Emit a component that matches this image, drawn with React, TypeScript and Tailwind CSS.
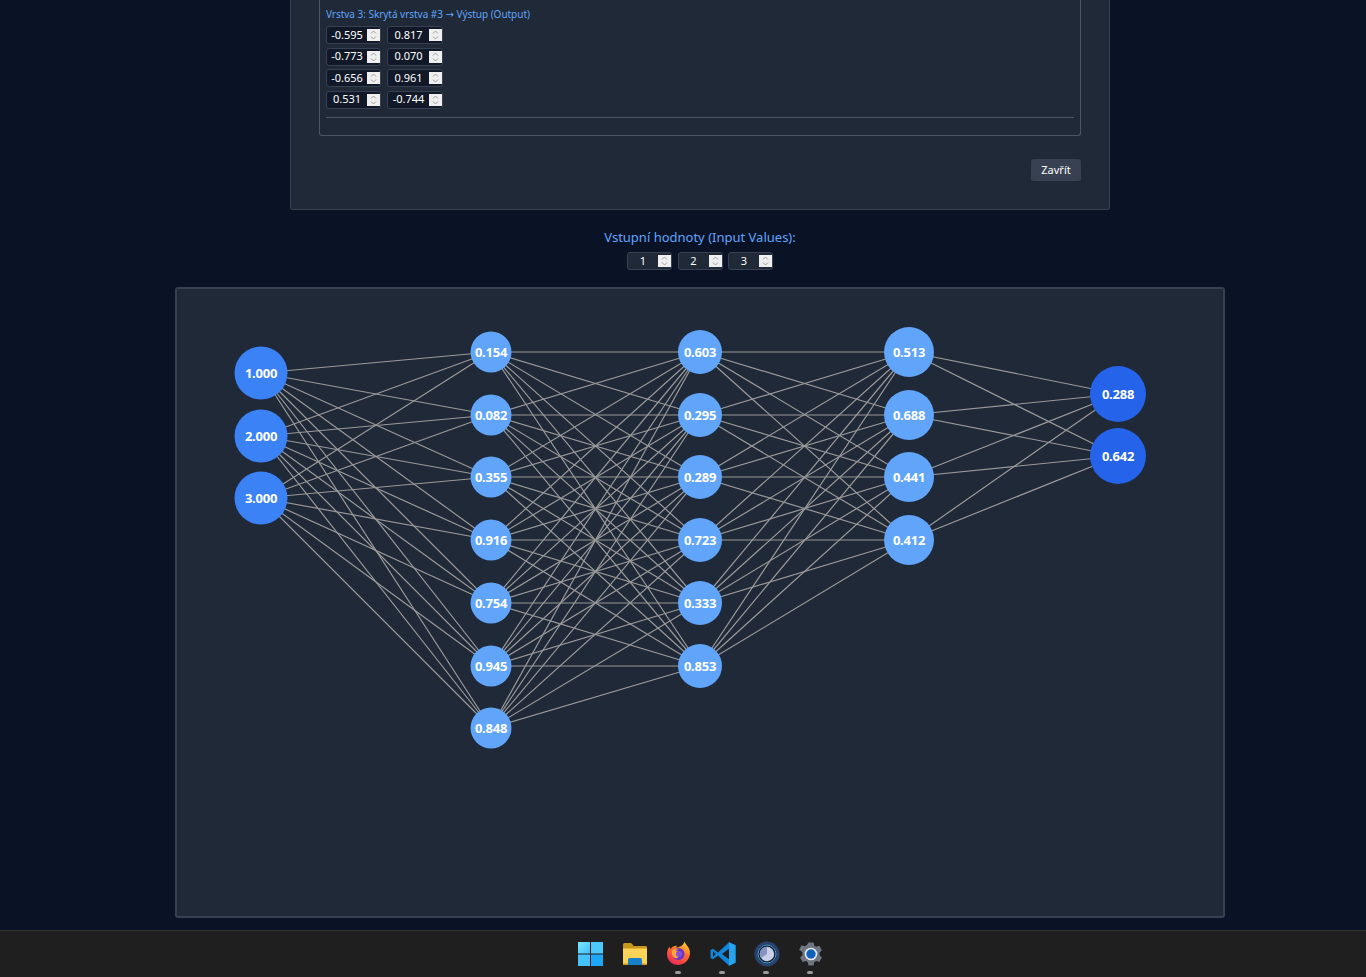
const layers = [
  { x: 84, r: 26.5, fill: '#3b82f6', nodes: [[84, '1.000'], [147, '2.000'], [209, '3.000']] },
  {
    x: 314,
    r: 20.5,
    fill: '#60a5fa',
    nodes: [[63, '0.154'], [126, '0.082'], [188, '0.355'], [251, '0.916'], [314, '0.754'], [377, '0.945'], [439, '0.848']],
  },
  {
    x: 523,
    r: 22,
    fill: '#60a5fa',
    nodes: [[63, '0.603'], [126, '0.295'], [188, '0.289'], [251, '0.723'], [314, '0.333'], [377, '0.853']],
  },
  { x: 732, r: 25, fill: '#60a5fa', nodes: [[63, '0.513'], [126, '0.688'], [188, '0.441'], [251, '0.412']] },
  { x: 941, r: 28, fill: '#2563eb', nodes: [[105, '0.288'], [167, '0.642']] },
] as { x: number; r: number; fill: string; nodes: [number, string][] }[];

const weights = [
  ['-0.595', '0.817'],
  ['-0.773', '0.070'],
  ['-0.656', '0.961'],
  ['0.531', '-0.744'],
];

function Network() {
  return (
    <svg width="1046" height="627" className="block">
      {layers.slice(0, -1).map((layer, i) =>
        layer.nodes.map(([y1]) =>
          layers[i + 1].nodes.map(([y2]) => (
            <line
              key={`${i}-${y1}-${y2}`}
              x1={layer.x}
              y1={y1}
              x2={layers[i + 1].x}
              y2={y2}
              stroke="#9a9a9a"
              strokeWidth="1.2"
            />
          )),
        ),
      )}
      {layers.map((layer) =>
        layer.nodes.map(([y, label]) => (
          <g key={`${layer.x}-${y}`}>
            <circle cx={layer.x} cy={y} r={layer.r} fill={layer.fill} />
            <text
              x={layer.x}
              y={y + 5}
              textAnchor="middle"
              fill="#ffffff"
              className="text-[13px] font-bold tracking-[-0.25px]"
            >
              {label}
            </text>
          </g>
        )),
      )}
    </svg>
  );
}

function Pill() {
  return <span className="absolute left-1/2 -translate-x-1/2 top-[29px] w-[6px] h-[3px] rounded-full bg-[#9a9a9a]" />;
}

function TaskbarIcons() {
  return (
    <>
      <div className="relative w-6 h-6">
        <svg width="25" height="24" viewBox="0 0 25 24">
          <defs>
            <linearGradient id="win" x1="0" y1="0" x2="1" y2="1">
              <stop offset="0" stopColor="#7be6fb" />
              <stop offset="1" stopColor="#3fc0fa" />
            </linearGradient>
          </defs>
          <rect x="0" y="0" width="12" height="11.500" fill="url(#win)" />
          <rect x="13" y="0" width="12" height="11.500" fill="#4cc8fa" />
          <rect x="0" y="12.500" width="12" height="11.500" fill="#45c2fa" />
          <rect x="13" y="12.500" width="12" height="11.500" fill="#1ea6f8" />
        </svg>
      </div>
      <div className="relative w-6 h-6">
        <svg width="26" height="24" viewBox="0 0 26 24">
          <path d="M1 2.500Q1 1 2.500 1H9l3 3h12Q25 4 25 5.500V22H1z" fill="#c8961a" />
          <path d="M1 6.500h24V21.500Q25 23 23.500 23h-21Q1 23 1 21.500z" fill="#fdd457" />
          <rect x="1" y="21.500" width="24" height="1.500" fill="#d19a1e" />
          <path d="M6 23v-5.500q0-1.500 1.500-1.500h11q1.500 0 1.500 1.500V23z" fill="#1a7fc9" />
        </svg>
      </div>
      <div className="relative w-6 h-6">
        <svg width="25" height="25" viewBox="0 0 25 25" className="-mt-px">
          <defs>
            <linearGradient id="fox" x1="0.75" y1="0" x2="0.25" y2="1">
              <stop offset="0" stopColor="#ffd02e" />
              <stop offset="0.45" stopColor="#ff6b2e" />
              <stop offset="1" stopColor="#e8255a" />
            </linearGradient>
          </defs>
          <path d="M18.500 0.500c.5 2 3 4 4.500 7 1.500 3.200 1.400 7.500-1 11-2.200 3.300-5.800 5.500-9.800 5.500C5.700 24 1 19.200 1 13 1 10 2 7.200 3.500 5.500l.6 2.700C5.600 6 8.300 4.300 11.500 4.700c-1 .7-1.500 1.300-1.700 1.800 2.800-.3 7.400-1 8.700-6z" fill="url(#fox)" />
          <circle cx="12.500" cy="13" r="6" fill="#6a35c9" />
          <path d="M6 10c1.500-2.200 4.500-3 7-1.700-1.500.2-2.800.8-3.500 1.800 2.700-.6 6.200.7 6.700 3.700-1-1-2.200-1.400-3.200-1.300 1 2-.2 4.400-2.700 4.700C7.800 17.400 5.300 14.400 6 10z" fill="#ffa63d" />
          <circle cx="13" cy="13" r="3" fill="#8b4fd9" />
        </svg>
        <Pill />
      </div>
      <div className="relative w-6 h-6">
        <svg width="26" height="24" viewBox="0 0 26 24">
          <path d="M19 0.300 25.500 3.300V20.700L19 23.700 8 13.500 3 17.300 0.500 16V8L3 6.700 8 10.500zM19 6.800 12 12l7 5.200z" fill="#1285d6" />
          <path d="M19 0.300 25.500 3.300V20.700L19 23.700z" fill="#27a3ee" />
          <path d="M3 9.300 5.700 12 3 14.700z" fill="#1f1f1f" />
        </svg>
        <Pill />
      </div>
      <div className="relative w-6 h-6">
        <svg width="26" height="26" viewBox="0 0 26 26" className="-mt-px">
          <circle cx="13" cy="13" r="12.500" fill="#2a4270" />
          <circle cx="13" cy="13" r="9.500" fill="#0f1c33" />
          <circle cx="13" cy="13" r="9" fill="none" stroke="#49a0c9" strokeWidth="1" />
          <circle cx="13" cy="13" r="7.200" fill="#c9cfe6" />
          <path d="M13 5.800a7.200 7.200 0 0 0-6 11.200L13 13z" fill="#8794bf" />
        </svg>
        <Pill />
      </div>
      <div className="relative w-6 h-6">
        <svg width="26" height="24" viewBox="0 0 24 24">
          <path d="M9.500 0.500h5l.8 3.200 2 1.100 3.100-1 2.500 4.400-2.300 2.300v2.800l2.300 2.300-2.500 4.300-3.100-.9-2 1.100-.8 3.300h-5l-.8-3.300-2-1.100-3.100.9-2.500-4.300 2.300-2.300V10L.1 7.700l2.500-4.400 3.100 1 2-1.100z" fill="#6f7680" />
          <circle cx="12" cy="12" r="6.300" fill="#e4e9f0" />
          <circle cx="12" cy="12" r="4.700" fill="#0f62b8" />
        </svg>
        <Pill />
      </div>
    </>
  );
}

function NumberInput({ value, className }: { value: string; className: string }) {
  return (
    <div className={`h-[18px] flex items-center rounded-[3px] border border-[#374151] ${className}`}>
      <input readOnly value={value} className="flex-1 min-w-0 text-center text-white bg-transparent outline-none text-[11px]" />
      <span className="w-[13px] h-[12px] bg-[#efefef] flex items-center justify-center">
        <svg width="7" height="10" viewBox="0 0 7 10" fill="none" stroke="#a0a0a0" strokeWidth="1">
          <path d="M1 3.500 3.500 1 6 3.500M1 6.500 3.500 9 6 6.500" />
        </svg>
      </span>
    </div>
  );
}

export default function App() {
  return (
    <div className="h-[977px] w-full flex flex-col overflow-hidden bg-[#0a1226] font-['Noto_Sans','Open_Sans',sans-serif]">
      <main className="flex-1 flex flex-col items-center pl-[34px]">
        <div className="w-[820px] h-[210px] bg-[#1f2937] border border-t-0 border-[#374151] rounded-b-[3px] pl-[28px] pr-[28px] flex flex-col">
          <div className="h-[136px] border border-t-0 border-[#4b5563] rounded-b-[3px] px-[6px] pt-[7px]">
            <div className="text-[10px] leading-[14px] text-[#60a5fa] tracking-[-0.03px]">
              Vrstva 3: Skrytá vrstva #3 <span className="font-['DejaVu_Sans']">→</span> Výstup (Output)
            </div>
            <div className="mt-[4px] flex flex-col gap-[3.500px]">
              {weights.map((row, i) => (
                <div key={i} className="flex gap-[6px]">
                  <NumberInput value={row[0]} className="w-[55px] bg-[#111827]" />
                  <NumberInput value={row[1]} className="w-[56px] bg-[#111827]" />
                </div>
              ))}
            </div>
            <div className="mt-[8px] h-px bg-[#4b5563]" />
          </div>
          <div className="mt-[23px] flex justify-end">
            <button className="w-[50px] h-[22px] bg-[#374151] rounded-[3px] text-white text-[11px]">Zavřít</button>
          </div>
        </div>

        <div className="mt-[18px] text-[13px] leading-[18px] text-[#60a5fa]">Vstupní hodnoty (Input Values):</div>
        <div className="mt-[6px] flex gap-[5.500px]">
          {['1', '2', '3'].map((v) => (
            <NumberInput key={v} value={v} className="w-[45px] bg-[#1f2937]" />
          ))}
        </div>

        <div className="mt-[17px] w-[1050px] h-[631px] bg-[#1f2937] border-2 border-[#374151] rounded-[3px]">
          <Network />
        </div>
      </main>

      <footer className="h-[47px] bg-[#1f1f1f] border-t border-[#333333] flex justify-center items-center gap-[20px] pl-[34px] pb-[1px]">
        <TaskbarIcons />
      </footer>
    </div>
  );
}
